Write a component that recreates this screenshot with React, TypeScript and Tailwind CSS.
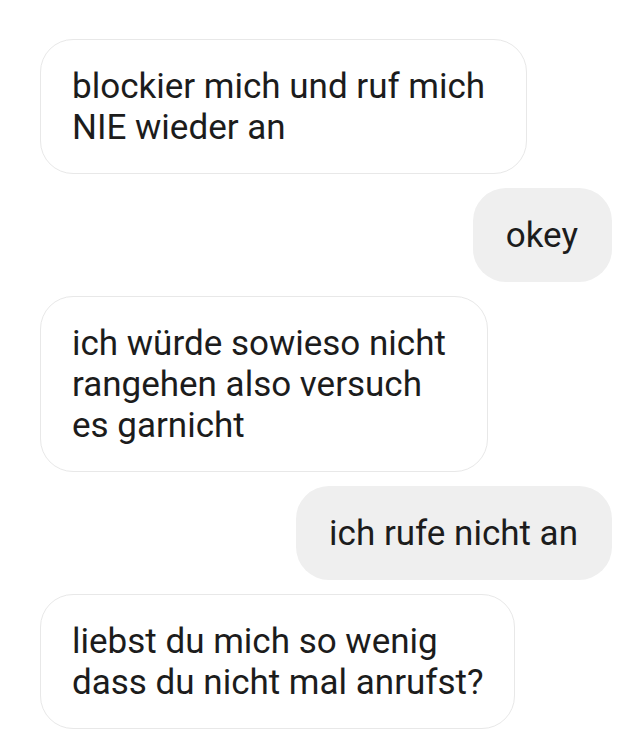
const messages: { from: "them" | "me"; lines: string[]; width?: string }[] = [
  { from: "them", lines: ["blockier mich und ruf mich", "NIE wieder an"], width: "w-[487px]" },
  { from: "me", lines: ["okey"] },
  { from: "them", lines: ["ich würde sowieso nicht", "rangehen also versuch", "es garnicht"], width: "w-[448px]" },
  { from: "me", lines: ["ich rufe nicht an"] },
  { from: "them", lines: ["liebst du mich so wenig", "dass du nicht mal anrufst?"], width: "w-[475px]" },
];

function Bubble({ from, lines, width }: { from: "them" | "me"; lines: string[]; width?: string }) {
  const mine = from === "me";
  return (
    <div className={`flex ${mine ? "justify-end" : "justify-start"}`}>
      <div
        className={
          mine
            ? "bg-[#efefef] rounded-[33px] pl-[33px] pr-[34px] pt-[27px] pb-[26px]"
            : `${width} bg-white border border-[#e8e8e8] rounded-[33px] pl-[31px] pt-[26px] pb-[25px]`
        }
      >
        {lines.map((l, i) => (
          <p key={i} className="text-[35px] leading-[41px] text-[#1c1c1c] whitespace-nowrap">
            {l}
          </p>
        ))}
      </div>
    </div>
  );
}

export default function App() {
  return (
    <div
      className="w-[643px] h-[737px] bg-white overflow-hidden pt-[39px] pl-[40px] pr-[31px] flex flex-col gap-[14px]"
      style={{ fontFamily: "Roboto, 'Noto Sans', sans-serif" }}
    >
      {messages.map((m, i) => (
        <Bubble key={i} {...m} />
      ))}
    </div>
  );
}
